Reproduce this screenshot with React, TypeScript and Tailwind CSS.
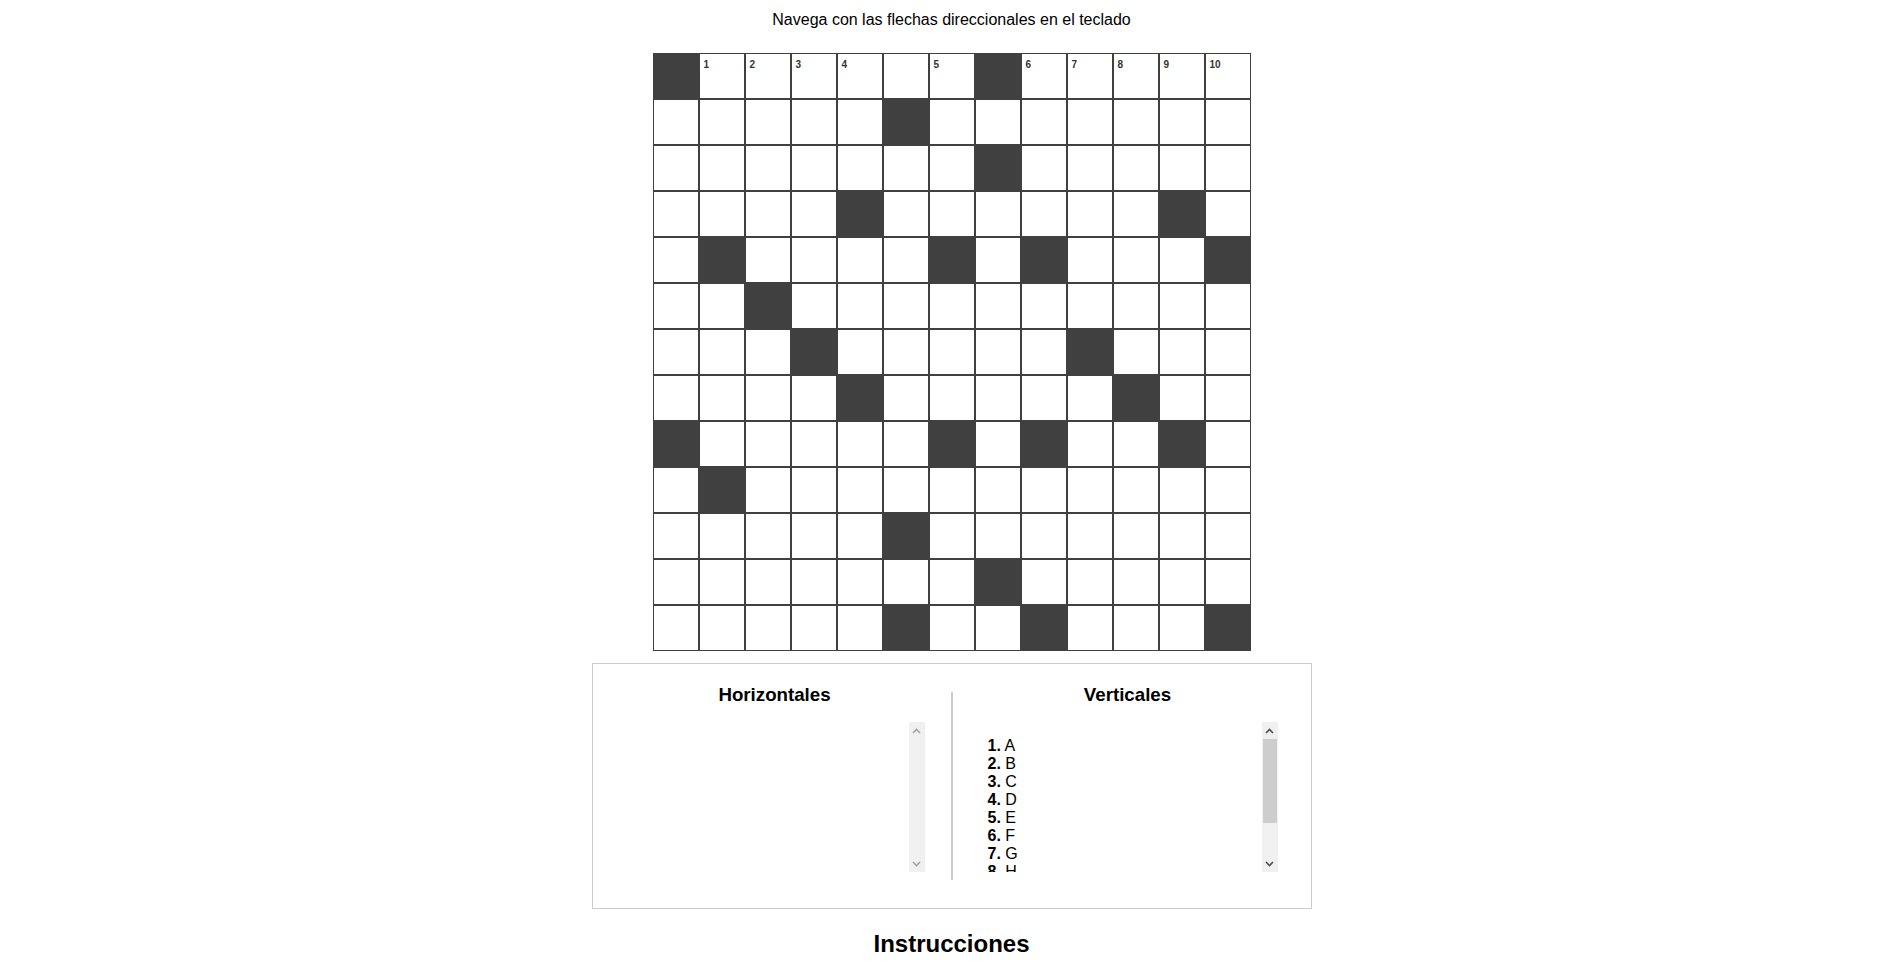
import React from "react";

const dark: Record<number, number[]> = {
  0: [0, 7],
  1: [5],
  2: [7],
  3: [4, 11],
  4: [1, 6, 8, 12],
  5: [2],
  6: [3, 9],
  7: [4, 10],
  8: [0, 6, 8, 11],
  9: [1],
  10: [5],
  11: [7],
  12: [5, 8, 12],
};

const nums: Record<number, string> = {
  1: "1",
  2: "2",
  3: "3",
  4: "4",
  6: "5",
  8: "6",
  9: "7",
  10: "8",
  11: "9",
  12: "10",
};

const verticales = ["A", "B", "C", "D", "E", "F", "G", "H", "I", "J"];

function Chevron({ up, color }: { up: boolean; color: string }) {
  return (
    <svg width="9" height="6" viewBox="0 0 9 6">
      <path
        d={up ? "M1 5 L4.5 1.5 L8 5" : "M1 1 L4.5 4.5 L8 1"}
        fill="none"
        stroke={color}
        strokeWidth="1.6"
      />
    </svg>
  );
}

function ScrollBar({ active }: { active: boolean }) {
  const color = active ? "#505050" : "#a3a3a3";
  return (
    <div className="flex h-full w-[16px] shrink-0 flex-col bg-[#f0f0f0]">
      <div className="flex h-[17px] items-center justify-center">
        <Chevron up color={color} />
      </div>
      <div className="flex-1 px-[1px]">
        {active && <div className="h-[84px] w-full bg-[#cdcdcd]" />}
      </div>
      <div className="flex h-[17px] items-center justify-center">
        <Chevron up={false} color={color} />
      </div>
    </div>
  );
}

export default function App() {
  const cells: React.ReactNode[] = [];
  for (let r = 0; r < 13; r++) {
    for (let c = 0; c < 13; c++) {
      const isDark = dark[r].includes(c);
      const num = r === 0 ? nums[c] : undefined;
      cells.push(
        <div
          key={`${r}-${c}`}
          className={`relative h-[46px] w-[46px] border border-[#404040] ${
            isDark ? "bg-[#404040]" : "bg-white"
          }`}
        >
          {num && !isDark && (
            <span className="absolute left-[4px] top-[5px] text-[10px] font-bold leading-[11.5px] text-[#333]">
              {num}
            </span>
          )}
        </div>
      );
    }
  }

  return (
    <div className="min-h-[966px] bg-white font-['Liberation_Sans',Arial,sans-serif] text-black">
      <p className="pt-[11px] text-center text-[16px] leading-[18.4px]">
        Navega con las flechas direccionales en el teclado
      </p>

      <div className="mx-auto mt-[24px] grid w-[598px] grid-cols-[repeat(13,46px)]">
        {cells}
      </div>

      <div className="mx-auto mt-[12px] flex h-[246px] w-[720px] border border-[#cccccc] pt-[20px]">
        <div className="flex w-[358px] flex-col">
          <h3 className="pl-[6px] text-center text-[18.72px] font-bold leading-[21.5px]">
            Horizontales
          </h3>
          <div className="ml-auto mr-[26px] mt-[16.5px] flex h-[150px] w-[330px]">
            <div className="flex-1 overflow-hidden" />
            <ScrollBar active={false} />
          </div>
        </div>
        <div className="mt-[8px] h-[188px] w-[2px] bg-[#cccccc]" />
        <div className="flex w-[358px] flex-col">
          <h3 className="pr-[8px] text-center text-[18.72px] font-bold leading-[21.5px]">
            Verticales
          </h3>
          <div className="ml-[2px] mt-[16.5px] flex h-[150px] w-[323px]">
            <div className="flex-1 overflow-hidden">
              <ol className="list-none pb-[16px] pl-[33px] pt-[15px] text-[16px] leading-[18px]">
                {verticales.map((v, i) => (
                  <li key={v}>
                    <b>{i + 1}.</b> {v}
                  </li>
                ))}
              </ol>
            </div>
            <ScrollBar active />
          </div>
        </div>
      </div>

      <h2 className="mt-[21px] text-center text-[24px] font-bold leading-[27.6px]">
        Instrucciones
      </h2>
    </div>
  );
}
